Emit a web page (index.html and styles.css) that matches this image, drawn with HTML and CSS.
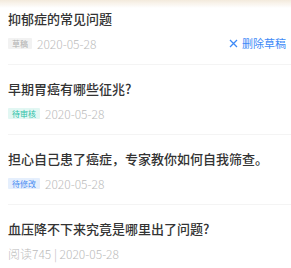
FILE: index.html
```html
<!DOCTYPE html>
<html lang="zh-CN">
<head>
    <meta charset="UTF-8">
    <meta name="viewport" content="width=device-width, initial-scale=1.0">
    <title>我的文章</title>
    <link rel="stylesheet" href="styles.css">
</head>
<body>
    <div class="top-shade"></div>
    <div class="list">
        <div class="item">
            <div class="title">抑郁症的常见问题</div>
            <div class="meta">
                <span class="tag tag-draft">草稿</span>
                <span class="date">2020-05-28</span>
                <span class="delete">
                    <svg width="9" height="9" viewBox="0 0 9 9"><path d="M1 1 L8 8 M8 1 L1 8" stroke="#3d8af7" stroke-width="1.3" fill="none"/></svg>
                    删除草稿
                </span>
            </div>
        </div>
        <div class="item">
            <div class="title">早期胃癌有哪些征兆?</div>
            <div class="meta">
                <span class="tag tag-review">待审核</span>
                <span class="date">2020-05-28</span>
            </div>
        </div>
        <div class="item">
            <div class="title">担心自己患了癌症，专家教你如何自我筛查。</div>
            <div class="meta">
                <span class="tag tag-edit">待修改</span>
                <span class="date">2020-05-28</span>
            </div>
        </div>
        <div class="item">
            <div class="title">血压降不下来究竟是哪里出了问题?</div>
            <div class="meta">
                <span class="date">阅读745 | 2020-05-28</span>
            </div>
        </div>
    </div>
</body>
</html>
```

FILE: styles.css
```css
body {
    margin: 0;
    padding: 0;
    background: #fff;
    font-family: "Noto Sans CJK SC", "Noto Sans", sans-serif;
    color: #333;
}
.top-shade {
    position: fixed;
    top: 0;
    left: 0;
    right: 0;
    height: 8px;
    background: linear-gradient(#f3eadc, rgba(255, 255, 255, 0));
}
.list {
    margin-top: -5px;
}
.item {
    margin-left: 8px;
    padding: 14px 5px 13px 0;
    border-bottom: 1px solid #f4f4f4;
}
.title {
    font-size: 13px;
    line-height: 20px;
    font-weight: 500;
    color: #333;
}
.meta {
    display: flex;
    align-items: center;
    margin-top: 6px;
    height: 16px;
}
.tag {
    font-size: 8px;
    line-height: 11px;
    padding: 0 4px;
    border-radius: 1px;
    margin-right: 5px;
}
.tag-draft {
    background: #f2f2f2;
    color: #b0b0b0;
}
.tag-review {
    background: #e2f7f3;
    color: #2ec2a8;
}
.tag-edit {
    background: #e5effd;
    color: #4b8ef2;
}
.date {
    font-size: 12px;
    font-weight: 300;
    color: #bbb;
}
.delete {
    margin-left: auto;
    display: flex;
    align-items: center;
    gap: 4px;
    font-size: 11px;
    color: #3d8af7;
}
```
